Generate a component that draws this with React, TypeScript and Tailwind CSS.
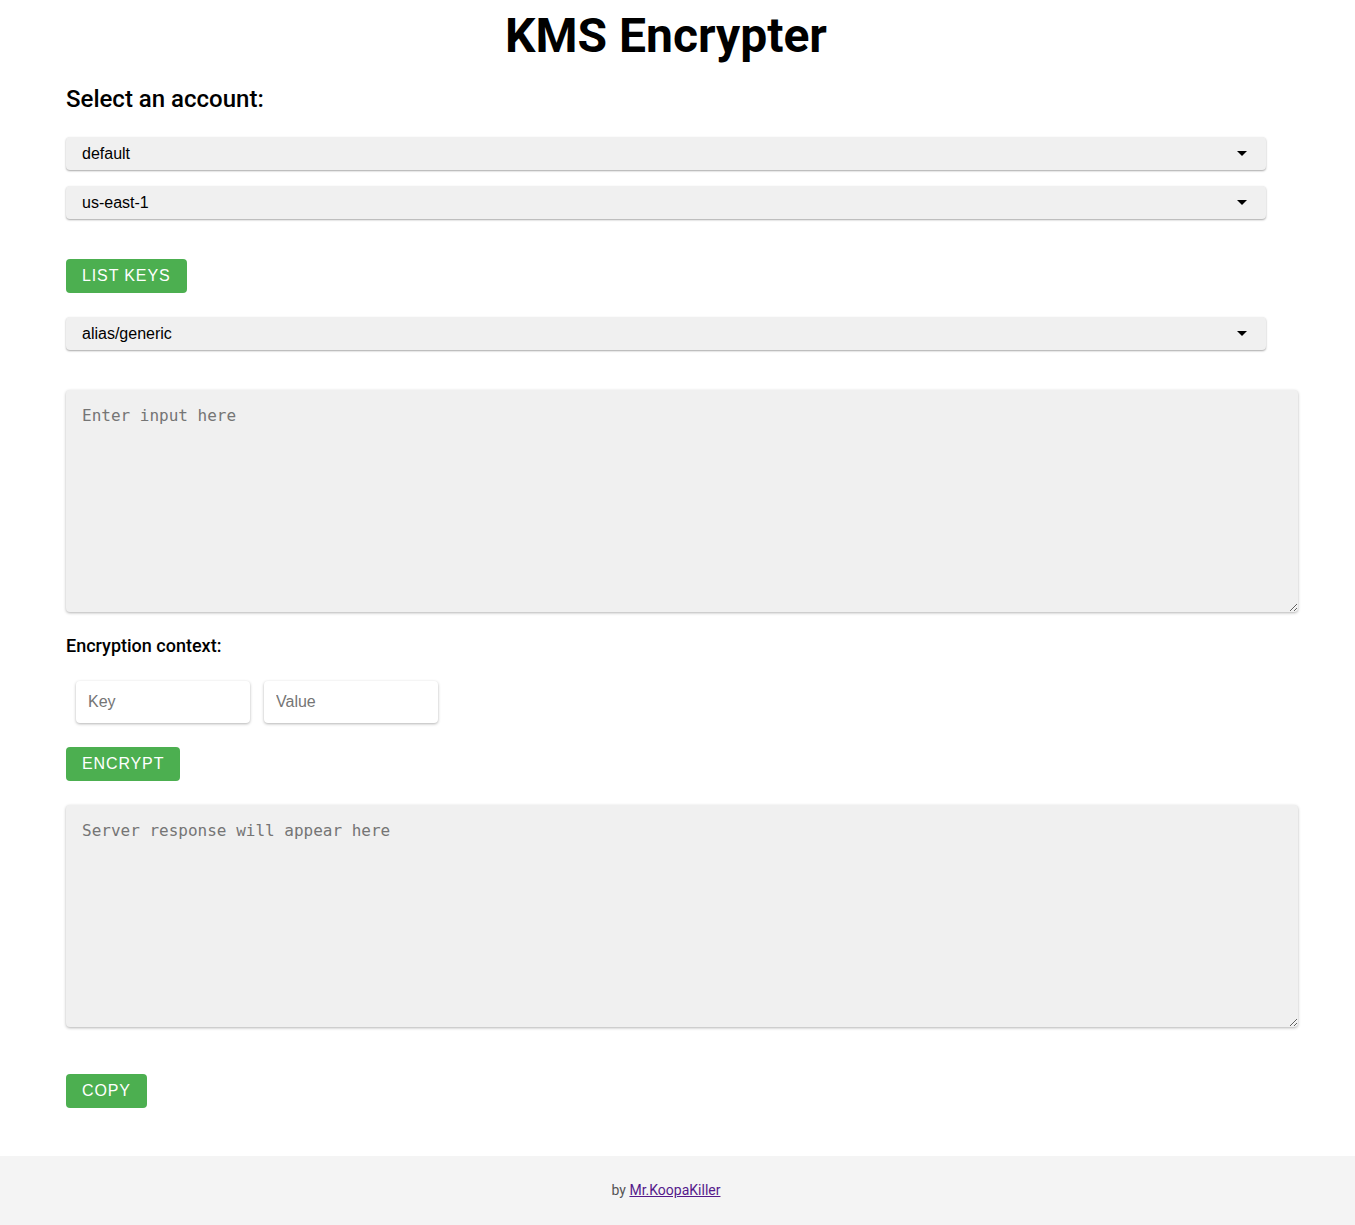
import React, { useState } from 'react';

const Caret = () => (
  <svg width="10" height="5" viewBox="0 0 10 5" className="shrink-0">
    <path d="M0 0 L10 0 L5 5 Z" fill="#000" />
  </svg>
);

const SelectBox: React.FC<{ value: string }> = ({ value }) => (
  <div className="w-[1200px] h-[33px] bg-[#f0f0f0] rounded-[4px] shadow-[0_1px_2px_rgba(0,0,0,0.35)] flex items-center justify-between pl-4 pr-[19px] text-[16px] text-black font-['Liberation_Sans',Arial,sans-serif]">
    <span>{value}</span>
    <Caret />
  </div>
);

const GreenButton: React.FC<{ label: string }> = ({ label }) => (
  <button className="h-[34px] px-4 bg-[#4caf50] text-white rounded-[4px] text-[16px] tracking-[0.875px] uppercase font-['Liberation_Sans',Arial,sans-serif]">
    {label}
  </button>
);

export default function App() {
  const [input, setInput] = useState('');
  const [ctxKey, setCtxKey] = useState('');
  const [ctxValue, setCtxValue] = useState('');

  return (
    <div className="min-h-[1225px] flex flex-col bg-white font-['Roboto',sans-serif]">
      <main className="flex-1 px-[66px]">
        <div className="w-[1200px]">
          <h1 className="text-center text-[48px] font-bold leading-none pt-[12px] text-black">KMS Encrypter</h1>
        </div>

        <h2 className="mt-[27px] text-[24px] font-medium leading-none text-black">Select an account:</h2>

        <div className="mt-[26px] flex flex-col gap-4">
          <SelectBox value="default" />
          <SelectBox value="us-east-1" />
        </div>

        <div className="mt-10">
          <GreenButton label="List keys" />
        </div>

        <div className="mt-6">
          <SelectBox value="alias/generic" />
        </div>

        <textarea
          value={input}
          onChange={(e) => setInput(e.target.value)}
          placeholder="Enter input here"
          className="mt-[40px] block w-[1232px] h-[222px] bg-[#f0f0f0] rounded-[4px] shadow-[0_1px_3px_rgba(0,0,0,0.3)] px-4 pt-[16px] pb-[14px] text-[16px] leading-[20px] font-['DejaVu_Sans_Mono',monospace] placeholder:text-[#757575] outline-none"
        />

        <h3 className="mt-[25px] text-[18px] font-medium leading-none text-black">Encryption context:</h3>

        <div className="mt-[26px] ml-[10px] flex gap-[14px]">
          <input
            value={ctxKey}
            onChange={(e) => setCtxKey(e.target.value)}
            placeholder="Key"
            className="w-[174px] h-[42px] bg-white rounded-[4px] shadow-[0_1px_3px_rgba(0,0,0,0.3)] px-3 text-[16px] font-['Liberation_Sans',Arial,sans-serif] placeholder:text-[#757575] outline-none"
          />
          <input
            value={ctxValue}
            onChange={(e) => setCtxValue(e.target.value)}
            placeholder="Value"
            className="w-[174px] h-[42px] bg-white rounded-[4px] shadow-[0_1px_3px_rgba(0,0,0,0.3)] px-3 text-[16px] font-['Liberation_Sans',Arial,sans-serif] placeholder:text-[#757575] outline-none"
          />
        </div>

        <div className="mt-6">
          <GreenButton label="Encrypt" />
        </div>

        <textarea
          readOnly
          placeholder="Server response will appear here"
          className="mt-6 block w-[1232px] h-[222px] bg-[#f0f0f0] rounded-[4px] shadow-[0_1px_3px_rgba(0,0,0,0.3)] px-4 pt-[16px] pb-[14px] text-[16px] leading-[20px] font-['DejaVu_Sans_Mono',monospace] placeholder:text-[#757575] outline-none"
        />

        <div className="mt-[47px] pb-12">
          <GreenButton label="Copy" />
        </div>
      </main>

      <footer className="h-[69px] bg-[#f4f4f4] flex items-center pl-[66px] text-[14px] text-[#555]">
        <div className="w-[1200px] text-center">
          by{' '}
          <a href="#" className="text-[#551a8b] underline">Mr.KoopaKiller</a>
        </div>
      </footer>
    </div>
  );
}
